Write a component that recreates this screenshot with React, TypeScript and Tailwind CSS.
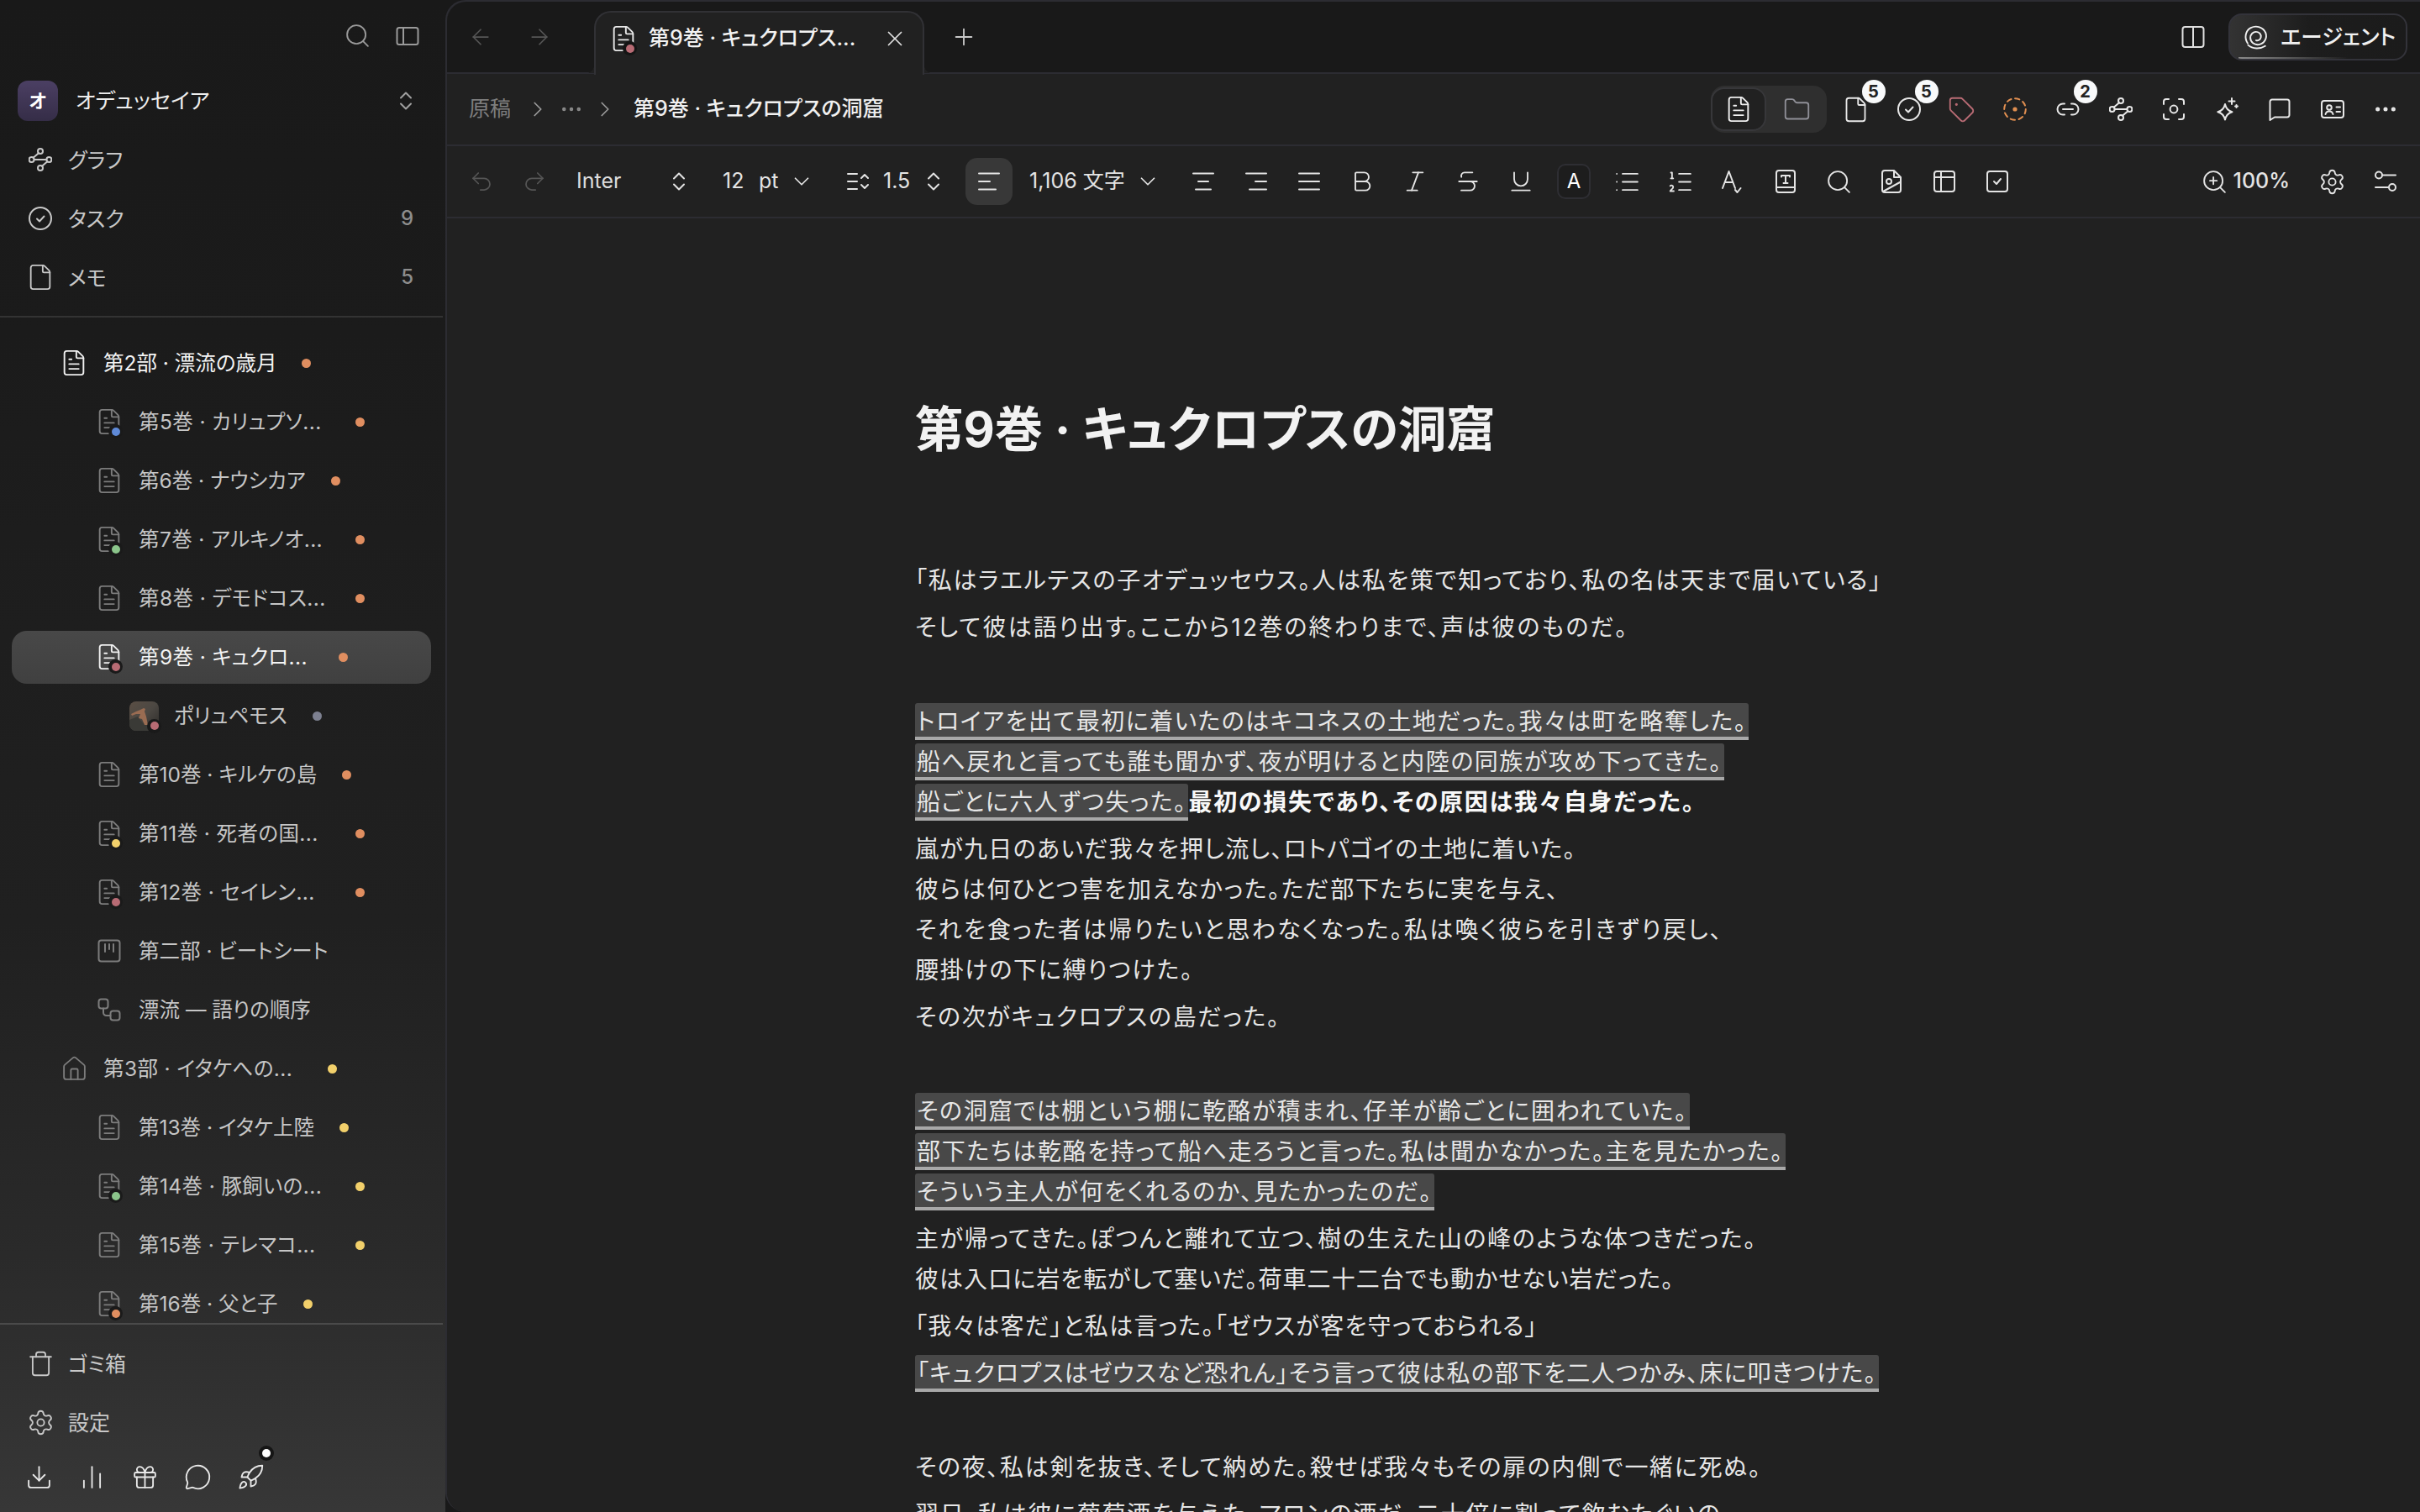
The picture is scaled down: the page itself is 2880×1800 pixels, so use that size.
import React from "react";
import {
  Search, ChevronRight, ChevronDown, Ellipsis, File, FileText, Folder, Tag, Plus, X, ArrowLeft, ArrowRight,
  Undo2, Redo2, Bold, Italic, Strikethrough, Underline, List, ListOrdered, ZoomIn, Settings, Trash, Download,
  ChartNoAxesColumn, Gift, MessageCircle, Rocket, House,
} from "lucide-react";

const S = ({ children, s = 28, sw = 2, className = "" }: { children: React.ReactNode; s?: number; sw?: number; className?: string }) => (
  <svg width={s} height={s} viewBox="0 0 28 28" fill="none" stroke="currentColor" strokeWidth={sw} strokeLinecap="round" strokeLinejoin="round" className={className}>
    {children}
  </svg>
);

const PanelIcon = () => (<S><rect x="1.5" y="4" width="25" height="20" rx="2.5" /><path d="M9 4v20" /></S>);
const SplitIcon = () => (<S><rect x="1.5" y="2" width="25" height="24" rx="3" /><path d="M14 2v24" /></S>);
const UpDown = ({ s = 28 }: { s?: number }) => (<S s={s}><path d="M8 10.5l6-6 6 6" /><path d="M8 17.5l6 6 6-6" /></S>);
const GraphIcon = ({ s = 28 }: { s?: number }) => (
  <S s={s}>
    <circle cx="14" cy="4" r="3" /><circle cx="3.6" cy="14" r="3" /><circle cx="24.4" cy="14" r="3" /><circle cx="14" cy="24" r="3" />
    <path d="M12 6.2 5.6 11.8M6.6 14h14.8M22.4 16.2 16 21.8" />
  </S>
);
const CircleCheckIcon = () => (<S><circle cx="14" cy="14" r="13" /><path d="M10 14.5l3 3 5.5-6" /></S>);
const DashedDot = () => (
  <S><circle cx="14" cy="14" r="12.8" strokeDasharray="5.4 4.6" /><circle cx="14" cy="14" r="1.6" fill="currentColor" /></S>
);
const LinkIcon = () => (<S><path d="M10 7.5H8a6.5 6.5 0 0 0 0 13h2M18 7.5h2a6.5 6.5 0 0 1 0 13h-2M8 14h12" /></S>);
const FocusIcon = () => (
  <S><path d="M2 8V5a3 3 0 0 1 3-3h3M20 2h3a3 3 0 0 1 3 3v3M26 20v3a3 3 0 0 1-3 3h-3M8 26H5a3 3 0 0 1-3-3v-3" /><circle cx="14" cy="14" r="4.4" /></S>
);
const SparkIcon = () => (
  <S><path d="M12 8c1.2 5.5 3.5 8 8.5 9.2-5 1.3-7.3 4-8.5 9.3-1.2-5.3-3.6-8-8.7-9.3C8.400 16 10.800 13.500 12 8z" /><path d="M20 1v7M16.500 4.500h7M25.500 9v3M24 10.500h3" /></S>
);
const CommentIcon = () => (<S><path d="M2.500 5a2.500 2.500 0 0 1 2.500-2.500h18a2.500 2.500 0 0 1 2.500 2.500v16a2.500 2.500 0 0 1-2.500 2.500H8l-5.500 3.500z" /></S>);
const CardIcon = () => (
  <S><rect x="1" y="4" width="26" height="20" rx="3" /><circle cx="10" cy="12" r="2.800" /><path d="M5.500 20c.6-2.500 2.300-3.500 4.500-3.500s3.900 1 4.500 3.500M18.500 11.500h4.500M18.500 17h4.500" /></S>
);
const SliderIcon = () => (<S><circle cx="6" cy="6.500" r="4" /><path d="M10 6.500h16M2 21h16" /><circle cx="22" cy="21" r="4" /></S>);
const Align = ({ mid, bottom }: { mid: string; bottom: string }) => (<S><path d="M2 4.500h24" /><path d={mid} /><path d={bottom} /></S>);
const LineHeightIcon = () => (<S><path d="M2 5h11M2 14h11M2 23h11M18 10l4-4 4 4M18 18l4 4 4-4" /></S>);
const SpellIcon = () => (<S><path d="M2 22 9.500 2 17 22M5 15h9M17 24l2.500 3 4-5" /></S>);
const BookIcon = () => (<S><rect x="3" y="1" width="22" height="26" rx="3" /><path d="M3 21h22M9 7h10M9 7v1.500M19 7v1.500M14 7v9M11.500 16h5" /></S>);
const FileImageIcon = () => (<S><path d="M17 1H6a3 3 0 0 0-3 3v20a3 3 0 0 0 3 3h16a3 3 0 0 0 3-3V9zM17 1v8h8" /><circle cx="11" cy="14" r="3" /><path d="M4 26 24 15" /></S>);
const TableIcon = () => (<S><rect x="2" y="2" width="24" height="24" rx="3" /><path d="M2 9h24M10 2v24" /></S>);
const SquareCheckIcon = () => (<S><rect x="2" y="2" width="24" height="24" rx="3" /><path d="M10 14l3 3 5-6" /></S>);
const BeatIcon = () => (<S><rect x="1.500" y="1.500" width="25" height="25" rx="3" /><path d="M9 6v9M14 6v6M19 6v9" /></S>);
const FlowIcon = () => (<S><rect x="1.500" y="1.500" width="11" height="11" rx="3" /><rect x="15.500" y="15.500" width="11" height="11" rx="3" /><path d="M7 12.500v5a3.500 3.500 0 0 0 3.500 3.500h5" /></S>);
const SpiralIcon = () => (
  <S s={30} sw={1.8}>
    <path d="M5.500 21C1.500 15 3 7 9 3.800 15 .8 23 3 25.500 9.500c2 5.800-1.500 12-7.500 13-5 .8-9.500-2.800-9.500-7.500 0-4 3.200-7 6.700-6.700 3.300.2 5.500 3 5 6-.5 2.500-3 4.200-5.300 3.500" />
    <path d="M6 23c5 4.500 13 4.800 19 1" />
  </S>
);

const Cell = ({ children, className = "" }: { children?: React.ReactNode; className?: string }) => (
  <div className={`relative flex h-[28px] w-[63px] shrink-0 items-center justify-center ${className}`}>{children}</div>
);
const Badge = ({ n }: { n: number }) => (
  <span className="absolute left-[38.500px] top-[-21px] flex h-[28px] w-[28px] items-center justify-center rounded-full bg-[#f8f9fa] text-[20px] font-bold text-[#222]">{n}</span>
);
const Status = ({ c, ring = "bg-[#1a1a1a]", className = "left-[21px] top-[21px]" }: { c: string; ring?: string; className?: string }) => (
  <span className={`absolute flex h-[17px] w-[17px] items-center justify-center rounded-full ${ring} ${className}`}>
    <span className={`h-[10px] w-[10px] rounded-full ${c}`} />
  </span>
);

const RED = "bg-[#b86b74]";
const BLUE = "bg-[#5f8ad8]";
const GREEN = "bg-[#8bc58b]";
const YEL = "bg-[#f2d06b]";
const ORG = "bg-[#e08e60]";
const GRY = "bg-[#7d8090]";

type RowT = { d: 0 | 1 | 2; t: string; dot: string; st?: string; icon?: "file" | "home" | "beat" | "flow"; active?: boolean; bright?: boolean; cut?: boolean };
const rows: RowT[] = [
  { d: 0, t: "第2部 · 漂流の歳月", dot: ORG, bright: true },
  { d: 1, t: "第5巻 · カリュプソ...", dot: ORG, st: BLUE, cut: true },
  { d: 1, t: "第6巻 · ナウシカア", dot: ORG },
  { d: 1, t: "第7巻 · アルキノオ...", dot: ORG, st: GREEN, cut: true },
  { d: 1, t: "第8巻 · デモドコス...", dot: ORG, cut: true },
  { d: 1, t: "第9巻 · キュクロ...", dot: ORG, st: RED, active: true, cut: true },
  { d: 2, t: "ポリュペモス", dot: GRY },
  { d: 1, t: "第10巻 · キルケの島", dot: ORG },
  { d: 1, t: "第11巻 · 死者の国...", dot: ORG, st: YEL, cut: true },
  { d: 1, t: "第12巻 · セイレン...", dot: ORG, st: RED, cut: true },
  { d: 1, t: "第二部 · ビートシート", dot: "", icon: "beat" },
  { d: 1, t: "漂流 — 語りの順序", dot: "", icon: "flow" },
  { d: 0, t: "第3部 · イタケへの...", dot: YEL, icon: "home", cut: true },
  { d: 1, t: "第13巻 · イタケ上陸", dot: YEL },
  { d: 1, t: "第14巻 · 豚飼いの...", dot: YEL, st: GREEN, cut: true },
  { d: 1, t: "第15巻 · テレマコ...", dot: YEL, cut: true },
  { d: 1, t: "第16巻 · 父と子", dot: YEL, st: ORG },
];

const Thumb = () => (
  <div className="relative h-[35px] w-[35px] shrink-0">
    <svg width="35" height="35" viewBox="0 0 35 35" className="rounded-[8px]">
      <defs>
        <linearGradient id="th" x1="0" y1="0" x2="1" y2="1">
          <stop offset="0" stopColor="#5a4e44" />
          <stop offset="0.5" stopColor="#4c4843" />
          <stop offset="1" stopColor="#2c2a28" />
        </linearGradient>
      </defs>
      <rect width="35" height="35" fill="url(#th)" />
      <path d="M0 22 10 18 16 26 35 24V35H0z" fill="#3a3a36" />
      <path d="M2 15 8 12 13 10 17 8 19 9 18 12 20 18 22 28 18 28 15 21 11 20 13 15 8 15 3 17z" fill="#9a6c52" />
    </svg>
    <Status c={RED} className="left-[21px] top-[21px]" />
  </div>
);

const Row = ({ r }: { r: RowT }) => {
  const pad = r.d === 0 ? "pl-[57px]" : r.d === 1 ? "pl-[99px]" : "pl-[140px]";
  const w = !r.cut ? "" : r.active ? "w-[208px]" : r.d === 0 ? "w-[237px]" : "w-[228px]";
  const iconColor = r.active || r.bright ? "text-[#f0f0f0]" : "text-[#7c7c7c]";
  return (
    <div className={`mx-[14px] my-[3.500px] flex h-[63px] shrink-0 items-center rounded-[18px] ${pad} ${r.active ? "bg-[linear-gradient(180deg,#484848,#404040)]" : ""}`}>
      {r.d === 2 ? (
        <Thumb />
      ) : (
        <div className={`relative flex h-[34px] w-[34px] shrink-0 items-center justify-center ${iconColor}`}>
          {r.icon === "home" ? <House size={33} strokeWidth={1.35} /> : r.icon === "beat" ? <BeatIcon /> : r.icon === "flow" ? <FlowIcon /> : <FileText size={34} strokeWidth={1.35} />}
          {r.st && <Status c={r.st} className="left-[16px] top-[20px]" />}
        </div>
      )}
      <span className={`ml-[18px] whitespace-nowrap text-[24.500px] ${r.cut ? "tracking-[0.4px]" : ""} ${w} ${r.active || r.bright ? "text-[#f4f4f4]" : "text-[#c6c6c6]"}`}>{r.t}</span>
      {r.dot && <span className={`ml-[30px] h-[11px] w-[11px] shrink-0 rounded-full ${r.dot}`} />}
    </div>
  );
};

const NavRow = ({ icon, label, n }: { icon: React.ReactNode; label: string; n?: number }) => (
  <div className="flex h-[70px] items-center pl-[31px] pr-[35px] text-[#c8c8c8]">
    <div className="flex w-[34px] shrink-0 items-center justify-center">{icon}</div>
    <span className="ml-[16px] translate-y-[1.500px] text-[25px]">{label}</span>
    {n !== undefined && <span className="ml-auto text-[24px] font-medium text-[#8d8d8d]">{n}</span>}
  </div>
);

const Sidebar = () => (
  <aside className="flex h-full w-[530px] shrink-0 flex-col bg-[linear-gradient(180deg,#191919_0%,#1b1b1b_22%,#1e1e1e_42%,#202020_61%,#2a2a2a_83%,#373737_100%)] pr-[3px]">
    <div className="flex h-[85px] shrink-0 items-center justify-end pr-[12px] text-[#9a9a9a]">
      <div className="flex w-[60px] justify-center"><Search size={33} strokeWidth={1.35} /></div>
      <div className="flex w-[60px] justify-center"><PanelIcon /></div>
    </div>
    <div className="flex h-[70px] shrink-0 items-center pl-[21px] pr-[30px]">
      <div className="flex h-[48px] w-[48px] items-center justify-center rounded-[12px] bg-[linear-gradient(180deg,#4b3f63,#352d47)] text-[22px] font-bold text-white">オ</div>
      <span className="ml-[21px] text-[25.500px] text-[#eeeeee]">オデュッセイア</span>
      <div className="ml-auto text-[#a0a0a0]"><UpDown /></div>
    </div>
    <NavRow icon={<GraphIcon />} label="グラフ" />
    <NavRow icon={<CircleCheckIcon />} label="タスク" n={9} />
    <NavRow icon={<File size={34} strokeWidth={1.3} />} label="メモ" n={5} />
    <div className="mt-[11px] h-[2px] shrink-0 bg-[#333333]" />
    <div className="flex min-h-0 flex-1 flex-col overflow-hidden pt-[19px]">
      {rows.map((r) => <Row key={r.t} r={r} />)}
    </div>
    <div className="h-[2px] shrink-0 bg-[#4a4a4a]" />
    <div className="pt-[11px]">
      <NavRow icon={<Trash size={33} strokeWidth={1.35} />} label="ゴミ箱" />
      <NavRow icon={<Settings size={33} strokeWidth={1.35} />} label="設定" />
    </div>
    <div className="flex h-[72px] shrink-0 items-center pb-[12px] pl-[14.500px] text-[#e8e8e8]">
      <Cell><Download size={33} strokeWidth={1.35} /></Cell>
      <Cell><ChartNoAxesColumn size={33} strokeWidth={1.35} /></Cell>
      <Cell><Gift size={33} strokeWidth={1.35} /></Cell>
      <Cell><MessageCircle size={33} strokeWidth={1.35} /></Cell>
      <Cell>
        <Rocket size={33} strokeWidth={1.35} />
        <span className="absolute left-[41px] top-[-23px] flex h-[18px] w-[18px] items-center justify-center rounded-full bg-[#151515]">
          <span className="h-[10px] w-[10px] rounded-full bg-white" />
        </span>
      </Cell>
    </div>
  </aside>
);

const TabBar = () => (
  <div className="flex h-[86px] shrink-0 items-center rounded-tl-[24px] border-b-2 border-[#2c2c32] bg-[#191919] pl-[5px] pr-[15px]">
    <div className="flex w-[140px] text-[#565656]">
      <div className="flex w-[70px] justify-center"><ArrowLeft size={30} strokeWidth={1.4} /></div>
      <div className="flex w-[70px] justify-center"><ArrowRight size={30} strokeWidth={1.4} /></div>
    </div>
    <div className="relative z-10 ml-[30px] flex h-[76px] w-[393px] shrink-0 translate-y-[7px] items-center self-center rounded-t-[20px] border-x-2 border-t-2 border-[#313135] bg-[#212121] pb-[12px] pl-[16px]">
      <span className="absolute -left-[12px] bottom-[2px] h-[10px] w-[10px] bg-[radial-gradient(circle_at_0_0,transparent_10px,#212121_10.500px)]" />
      <span className="absolute -right-[12px] bottom-[2px] h-[10px] w-[10px] bg-[radial-gradient(circle_at_100%_0,transparent_10px,#212121_10.500px)]" />
      <div className="relative text-[#e8e8e8]">
        <FileText size={34} strokeWidth={1.35} />
        <Status c={RED} ring="bg-[#151515]" className="left-[16px] top-[20px]" />
      </div>
      <span className="ml-[13px] w-[256px] whitespace-nowrap text-[25px] font-medium text-[#f2f2f2]">第9巻 · キュクロプス...</span>
      <div className="ml-[22px] text-[#e0e0e0]"><X size={30} strokeWidth={1.4} /></div>
    </div>
    <div className="flex w-[94px] justify-center text-[#c8c8c8]"><Plus size={32} strokeWidth={1.4} /></div>
    <div className="ml-auto flex items-center">
      <Cell className="text-[#e0e0e0]"><SplitIcon /></Cell>
      <div className="relative ml-[11px] flex h-[56px] w-[213px] items-center overflow-hidden rounded-[16px] border-2 border-[#33333a] bg-[linear-gradient(90deg,#333333,#1d1d1d_45%,#1b1b1b)] pl-[15px] text-[#f0f0f0]">
        <SpiralIcon />
        <span className="ml-[15px] text-[25.500px] font-medium">エージェント</span>
        <span className="absolute bottom-0 left-[10px] h-[2px] w-[130px] bg-[linear-gradient(90deg,#8a8a8a,transparent)]" />
      </div>
    </div>
  </div>
);

const BreadBar = () => (
  <div className="flex h-[86px] shrink-0 items-center border-b-2 border-[#2c2c32] bg-[#212121] pl-[26px] pr-[10px]">
    <span className="text-[25px] text-[#7e7e7e]">原稿</span>
    <div className="ml-[12px] flex w-[40px] justify-center text-[#9a9a9a]"><ChevronRight size={30} strokeWidth={1.4} /></div>
    <div className="flex w-[40px] justify-center text-[#8a8a8a]"><Ellipsis size={30} strokeWidth={1.6} /></div>
    <div className="flex w-[40px] justify-center text-[#9a9a9a]"><ChevronRight size={30} strokeWidth={1.4} /></div>
    <span className="ml-[14px] text-[25px] font-medium text-[#f0f0f0]">第9巻 · キュクロプスの洞窟</span>
    <div className="ml-auto flex items-center text-[#e8e8e8]">
      <div className="relative mr-[3px] flex h-[56px] w-[138px] items-center rounded-[16px] bg-[#2f2f2f]">
        <div className="flex h-[52px] w-[66px] items-center justify-center rounded-[16px] border-2 border-[#37373a] bg-[#212121] text-[#f0f0f0]">
          <FileText size={34} strokeWidth={1.35} />
        </div>
        <div className="flex w-[72px] justify-center text-[#909098]"><Folder size={33} strokeWidth={1.35} /></div>
      </div>
      <Cell><File size={33} strokeWidth={1.35} /><Badge n={5} /></Cell>
      <Cell><CircleCheckIcon /><Badge n={5} /></Cell>
      <Cell className="text-[#b86b74]"><Tag size={33} strokeWidth={1.35} /></Cell>
      <Cell className="text-[#e08e50]"><DashedDot /></Cell>
      <Cell><LinkIcon /><Badge n={2} /></Cell>
      <Cell><GraphIcon /></Cell>
      <Cell><FocusIcon /></Cell>
      <Cell><SparkIcon /></Cell>
      <Cell><CommentIcon /></Cell>
      <Cell><CardIcon /></Cell>
      <Cell><Ellipsis size={32} strokeWidth={1.8} /></Cell>
    </div>
  </div>
);

const ToolBar = () => (
  <div className="flex h-[86px] shrink-0 items-center border-b-2 border-[#2c2c32] bg-[#212121] pl-[9px] pr-[10px] text-[25px] text-[#e4e4e4]">
    <Cell className="text-[#555555]"><Undo2 size={30} strokeWidth={1.4} /></Cell>
    <Cell className="text-[#555555]"><Redo2 size={30} strokeWidth={1.4} /></Cell>
    <span className="ml-[19px] w-[105px] text-[#dddddd]">Inter</span>
    <div className="flex w-[34px] justify-center"><UpDown /></div>
    <span className="ml-[35px] w-[43px]">12</span>
    <span className="w-[32px]">pt</span>
    <div className="flex w-[38px] justify-center"><ChevronDown size={30} strokeWidth={1.4} /></div>
    <div className="ml-[31px] flex w-[34px] justify-center"><LineHeightIcon /></div>
    <span className="ml-[13px] w-[30px]">1.5</span>
    <div className="ml-[13px] flex w-[34px] justify-center"><UpDown /></div>
    <div className="ml-[21px] flex h-[56px] w-[56px] items-center justify-center rounded-[14px] bg-[#383838]">
      <Align mid="M2 14h13" bottom="M2 23.500h20" />
    </div>
    <span className="ml-[20px] w-[112px] whitespace-nowrap">1,106 文字</span>
    <div className="ml-[12px] flex w-[34px] justify-center"><ChevronDown size={30} strokeWidth={1.4} /></div>
    <div className="ml-[17.500px] flex items-center">
      <Cell><Align mid="M8 14h12" bottom="M5 23.500h18" /></Cell>
      <Cell><Align mid="M13 14h13" bottom="M6 23.500h20" /></Cell>
      <Cell><Align mid="M2 14h24" bottom="M2 23.500h24" /></Cell>
      <Cell><Bold size={32} strokeWidth={1.4} /></Cell>
      <Cell><Italic size={32} strokeWidth={1.4} /></Cell>
      <Cell><Strikethrough size={32} strokeWidth={1.4} /></Cell>
      <Cell><Underline size={32} strokeWidth={1.4} /></Cell>
      <Cell>
        <span className="flex h-[42px] w-[40px] items-center justify-center rounded-[10px] border-2 border-[#2e2e33] bg-[#1d1d1d] text-[24px] text-white">A</span>
      </Cell>
      <Cell><List size={33} strokeWidth={1.35} /></Cell>
      <Cell><ListOrdered size={33} strokeWidth={1.35} /></Cell>
      <Cell><SpellIcon /></Cell>
      <Cell><BookIcon /></Cell>
      <Cell><Search size={33} strokeWidth={1.35} /></Cell>
      <Cell><FileImageIcon /></Cell>
      <Cell><TableIcon /></Cell>
      <Cell><SquareCheckIcon /></Cell>
    </div>
    <div className="ml-auto flex items-center">
      <ZoomIn size={33} strokeWidth={1.35} />
      <span className="ml-[6px] mr-[19px] font-medium">100%</span>
      <Cell><Settings size={33} strokeWidth={1.35} /></Cell>
      <Cell><SliderIcon /></Cell>
    </div>
  </div>
);

const Mark = ({ children, className = "" }: { children: React.ReactNode; className?: string }) => (
  <span className={`rounded-t-[3px] border-b-[4px] border-[#a8a8a8] bg-[#484848] px-[2px] [box-decoration-break:clone] [-webkit-box-decoration-break:clone] ${className}`}>{children}</span>
);
const P = ({ children }: { children?: React.ReactNode }) => <p className="mb-[8px] min-h-[48px]">{children}</p>;

const Doc = () => (
  <div className="min-h-0 flex-1 overflow-hidden bg-[#212121]">
    <div className="mx-auto w-[1234px] pt-[211px]">
      <h1 className="mb-[114px] text-[57.500px] font-bold leading-[80px] text-[#f2f2f2]">第9巻 · キュクロプスの洞窟</h1>
      <div className="font-['Noto_Sans_CJK_JP',sans-serif] text-[28px] leading-[48px] tracking-[1.700px] text-[#e6e6e6]">
        <P>「私はラエルテスの子オデュッセウス。人は私を策で知っており、私の名は天まで届いている」</P>
        <P><span className="tracking-[2.200px]">そして彼は語り出す。ここから<span className="font-['Inter'] leading-none">12</span>巻の終わりまで、声は彼のものだ。</span></P>
        <P />
        <P>
          <Mark className="tracking-[1.500px]">トロイアを出て最初に着いたのはキコネスの土地だった。我々は町を略奪した。<br />船へ戻れと言っても誰も聞かず、夜が明けると内陸の同族が攻め下ってきた。<br />船ごとに六人ずつ失った。</Mark>
          <strong className="font-bold text-[#f8f8f8]">最初の損失であり、その原因は我々自身だった。</strong>
        </P>
        <P><span className="tracking-[1.300px]">嵐が九日のあいだ我々を押し流し、ロトパゴイの土地に着いた。</span><br />彼らは何ひとつ害を加えなかった。ただ部下たちに実を与え、<br /><span className="tracking-[2.250px]">それを食った者は帰りたいと思わなくなった。私は喚く彼らを引きずり戻し、</span><br />腰掛けの下に縛りつけた。</P>
        <P>その次がキュクロプスの島だった。</P>
        <P />
        <P>
          <Mark>その洞窟では棚という棚に乾酪が積まれ、仔羊が齢ごとに囲われていた。<br />部下たちは乾酪を持って船へ走ろうと言った。私は聞かなかった。主を見たかった。<br />そういう主人が何をくれるのか、見たかったのだ。</Mark>
        </P>
        <P>主が帰ってきた。ぽつんと離れて立つ、樹の生えた山の峰のような体つきだった。<br /><span className="tracking-[1.050px]">彼は入口に岩を転がして塞いだ。荷車二十二台でも動かせない岩だった。</span></P>
        <P><span className="tracking-[1.300px]">「我々は客だ」と私は言った。「ゼウスが客を守っておられる」</span></P>
        <P><Mark className="tracking-[1.200px]">「キュクロプスはゼウスなど恐れん」そう言って彼は私の部下を二人つかみ、床に叩きつけた。</Mark></P>
        <P />
        <P>その夜、私は剣を抜き、そして納めた。殺せば我々もその扉の内側で一緒に死ぬ。</P>
        <P>翌日、私は彼に葡萄酒を与えた。マロンの酒だ。二十倍に割って飲むたぐいの</P>
      </div>
    </div>
  </div>
);

export default function App() {
  return (
    <div className="flex h-[1800px] w-[2880px] overflow-hidden bg-[#191919] font-['Inter','Noto_Sans_CJK_JP',sans-serif] [font-feature-settings:'palt']">
      <Sidebar />
      <main className="flex h-full min-w-0 flex-1 flex-col overflow-hidden rounded-l-[24px] border-l-2 border-t-2 border-[#2c2c32] bg-[#212121]">
        <TabBar />
        <BreadBar />
        <ToolBar />
        <Doc />
      </main>
    </div>
  );
}
